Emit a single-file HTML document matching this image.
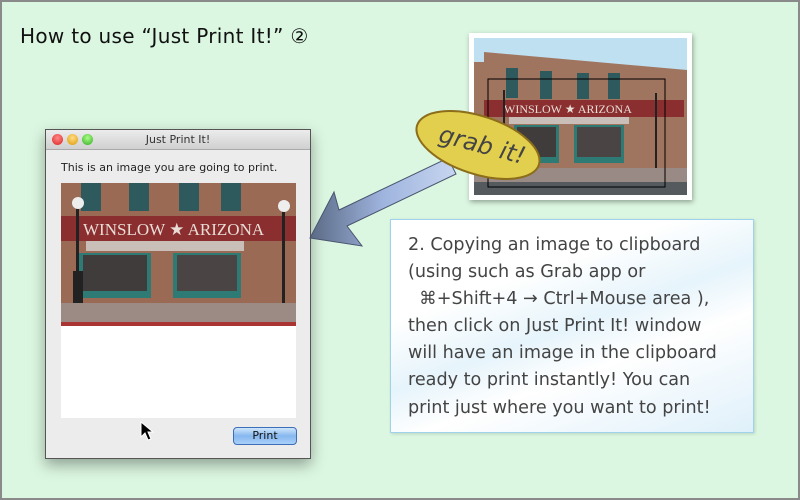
<!DOCTYPE html>
<html><head><meta charset="utf-8"><style>
body{margin:0;width:800px;height:500px;overflow:hidden;font-family:"DejaVu Sans","Liberation Sans",sans-serif}
#bg{position:absolute;left:0;top:0;width:796px;height:496px;border:2px solid #8a8a8a;background:#dbf7e1}
.t{position:absolute;white-space:nowrap}
.win{position:absolute;left:45px;top:129px;width:264px;height:328px;background:#ececec;border:1px solid #555;box-shadow:0 6px 14px rgba(0,0,0,.35)}
.tb{height:19px;background:linear-gradient(#ececec,#d0d0d0);border-bottom:1px solid #aaa;text-align:center;font-size:11px;line-height:19px;color:#333}
.dot{position:absolute;top:4px;width:11px;height:11px;border-radius:50%}
.photo{position:absolute;overflow:hidden}
.box{position:absolute;left:390px;top:219px;width:362px;height:212px;border:1px solid #9fd3ec;background:linear-gradient(160deg,#fff 0%,#fff 30%,#e6f4fb 50%,#fff 65%,#dff0fa 100%);box-shadow:1px 1px 3px rgba(0,0,0,.15)}
</style></head><body>
<div id="bg"></div>
<div class="t" style="left:20px;top:24px;font-size:20px;color:#111;letter-spacing:0.3px">How to use “Just Print It!” ②</div>

<div class="win">
 <div class="tb">Just Print It!
  <div class="dot" style="left:6px;background:radial-gradient(circle at 50% 35%,#f88,#d22)"></div>
  <div class="dot" style="left:21px;background:radial-gradient(circle at 50% 35%,#fd8,#d90)"></div>
  <div class="dot" style="left:36px;background:radial-gradient(circle at 50% 35%,#af8,#3a2)"></div>
 </div>
 <div class="t" style="left:15px;top:31px;font-size:11px;color:#222">This is an image you are going to print.</div>
 <div style="position:absolute;left:15px;top:53px;width:235px;height:235px;background:#fff"></div>
 <svg class="photo" style="left:15px;top:53px" width="235" height="143" viewBox="0 0 235 143">
  <rect width="235" height="143" fill="#9b6a55"/>
  <rect x="20" y="0" width="20" height="28" fill="#2e5a5e"/><rect x="68" y="0" width="20" height="28" fill="#2e5a5e"/><rect x="118" y="0" width="20" height="28" fill="#2e5a5e"/><rect x="160" y="0" width="20" height="28" fill="#2e5a5e"/>
  <rect x="0" y="33" width="235" height="25" fill="#8a2e30"/>
  <text x="22" y="52" font-family="Liberation Serif" font-size="17" fill="#e8ddd5">WINSLOW ★ ARIZONA</text>
  <rect x="25" y="58" width="158" height="10" fill="#c9bfb8"/>
  <rect x="18" y="70" width="72" height="45" fill="#2e7a74"/><rect x="22" y="72" width="64" height="36" fill="#403c3c"/>
  <rect x="112" y="70" width="68" height="45" fill="#2e7a74"/><rect x="116" y="72" width="60" height="36" fill="#4a4444"/>
  <rect x="15" y="20" width="3" height="105" fill="#222"/><circle cx="17" cy="20" r="6" fill="#eee"/>
  <rect x="221" y="26" width="3" height="95" fill="#222"/><circle cx="223" cy="23" r="6" fill="#eee"/>
  <rect x="12" y="88" width="10" height="38" fill="#222"/>
  <rect x="0" y="120" width="235" height="20" fill="#9c8a85"/><rect x="0" y="139" width="235" height="4" fill="#a33"/>
 </svg>
 <div style="position:absolute;left:187px;top:297px;width:62px;height:16px;border:1px solid #3d6fb8;border-radius:4px;background:linear-gradient(#cfe6fb,#86b8ef 50%,#a9d0f7);font-size:11px;text-align:center;line-height:16px;color:#111">Print</div>
 <svg style="position:absolute;left:93px;top:291px" width="16" height="22"><path d="M2 1 L2 16 L6 12 L9 19 L12 18 L9 11 L14 11 Z" fill="#000" stroke="#fff" stroke-width="1"/></svg>
</div>

<div style="position:absolute;left:469px;top:33px;width:223px;height:167px;background:#fff;box-shadow:1px 2px 5px rgba(0,0,0,.35)"></div>
<svg class="photo" style="left:474px;top:38px" width="213" height="157" viewBox="0 0 213 157">
 <rect width="213" height="40" fill="#bfe0f0"/>
 <path d="M10 24 L10 14 L213 32 L213 157 L0 157 L0 24 Z" fill="#a07560"/>
 <rect x="32" y="30" width="12" height="30" fill="#2e5a5e"/><rect x="66" y="33" width="12" height="28" fill="#2e5a5e"/><rect x="103" y="35" width="12" height="26" fill="#2e5a5e"/><rect x="134" y="35" width="12" height="26" fill="#2e5a5e"/>
 <rect x="10" y="62" width="200" height="17" fill="#8a2e30"/>
 <text x="30" y="75" font-family="Liberation Serif" font-size="12" fill="#e8ddd5">WINSLOW ★ ARIZONA</text>
 <rect x="35" y="79" width="120" height="7" fill="#c9bfb8"/>
 <rect x="40" y="87" width="45" height="38" fill="#2e7a74"/><rect x="43" y="89" width="39" height="30" fill="#403c3c"/>
 <rect x="100" y="87" width="50" height="38" fill="#2e7a74"/><rect x="103" y="89" width="44" height="30" fill="#4a4444"/>
 <rect x="29" y="52" width="2" height="80" fill="#222"/><rect x="181" y="55" width="2" height="80" fill="#222"/>
 <rect x="0" y="130" width="213" height="14" fill="#9a8a85"/><rect x="0" y="144" width="213" height="13" fill="#555a5e"/>
 <rect x="14" y="41" width="177" height="108" fill="none" stroke="#000" stroke-width="1"/>
</svg>

<svg style="position:absolute;left:0;top:0" width="800" height="500">
 <defs><linearGradient id="ag" x1="0" y1="0" x2="1" y2="0"><stop offset="0" stop-color="#5a6a85"/><stop offset=".5" stop-color="#9fb4de"/><stop offset="1" stop-color="#c7d6f0"/></linearGradient></defs>
 <path d="M310 238 L334 192 L339 210 L448 158 L456 174 L347 226 L362 246 Z" fill="url(#ag)" stroke="#4a5570" stroke-width="1"/>
 <ellipse cx="478" cy="145" rx="64" ry="29" transform="rotate(18 478 145)" fill="#e3cf4e" stroke="#8b6d1a" stroke-width="2"/>
 <text x="438" y="152" transform="rotate(15 478 145)" font-family="DejaVu Sans" font-style="italic" font-size="24" fill="#444">grab it!</text>
</svg>

<div class="box"></div>
<div class="t" style="left:408px;top:232px;font-size:17.6px;line-height:27.1px;color:#444">2. Copying an image to clipboard<br>(using such as Grab app or<br>&nbsp;&nbsp;⌘+Shift+4 → Ctrl+Mouse area ),<br>then click on Just Print It! window<br>will have an image in the clipboard<br>ready to print instantly! You can<br>print just where you want to print!</div>
</body></html>
